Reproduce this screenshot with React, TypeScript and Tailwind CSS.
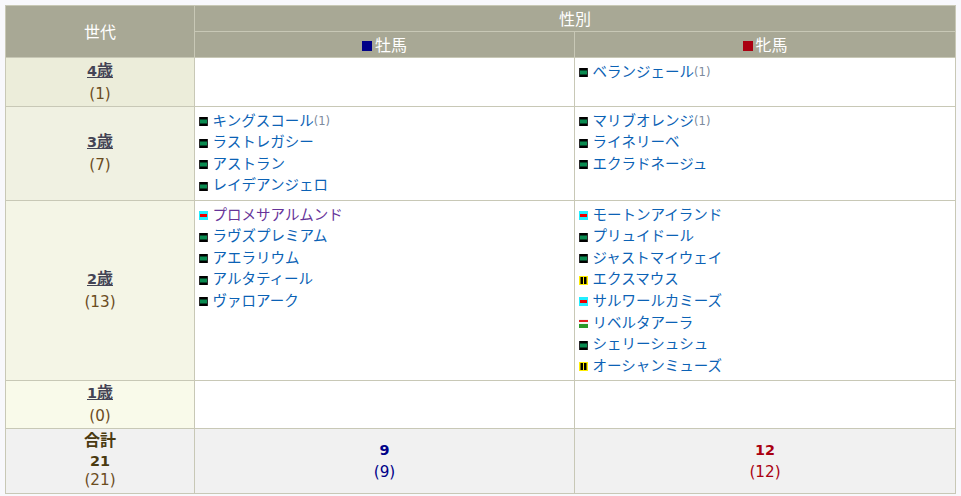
type Silk = "green" | "cyan" | "yellow" | "white";

type Horse = { name: string; silk: Silk; count?: number; visited?: boolean };

function SilkIcon({ silk }: { silk: Silk }) {
    return (
        <svg width="9" height="9" viewBox="0 0 9 9" className="mr-[4.6px] inline-block shrink-0">
            {silk === "green" && (
                <>
                    <rect width="9" height="9" fill="#2a2a2a" />
                    <rect x="1" width="7" height="9" fill="#000" />
                    <rect x="1" y="2.5" width="7" height="4" fill="#0a8a50" />
                </>
            )}
            {silk === "cyan" && (
                <>
                    <rect width="9" height="9" fill="#22eeff" />
                    <rect x="1" y="3" width="7" height="3" fill="#f00000" />
                </>
            )}
            {silk === "yellow" && (
                <>
                    <rect width="9" height="9" fill="#ffee00" />
                    <rect x="1.5" y="1" width="2.5" height="7" fill="#000" />
                    <rect x="5" y="1" width="2.5" height="7" fill="#000" />
                </>
            )}
            {silk === "white" && (
                <>
                    <rect width="9" height="9" fill="#f4f4f4" />
                    <rect y="1" width="9" height="2" fill="#e02020" />
                    <rect y="5" width="9" height="4" fill="#2a9a2a" />
                </>
            )}
        </svg>
    );
}

function HorseList({ horses }: { horses: Horse[] }) {
    return (
        <ul className="flex flex-col">
            {horses.map((h) => (
                <li key={h.name} className="flex h-[21.6px] items-center whitespace-nowrap">
                    <SilkIcon silk={h.silk} />
                    <a href="#" className={h.visited ? "text-[#663399]" : "text-[#0b62b5]"}>
                        {h.name}
                    </a>
                    {h.count !== undefined && (
                        <span className="text-[11.5px] text-[#7d8a9c]">({h.count})</span>
                    )}
                </li>
            ))}
        </ul>
    );
}

function AgeCell({ age, count, bg }: { age: string; count: number; bg: string }) {
    return (
        <td className={`border border-[#c8c8b6] text-center align-middle ${bg}`}>
            <a href="#" className="block h-[21px] font-bold leading-[21px] text-[#444455] underline">
                <span className="text-[14.4px]">{age.slice(0, 1)}</span>
                <span className="text-[16px]">{age.slice(1)}</span>
            </a>
            <div className="mt-[2px] h-[22px] text-[15.2px] leading-[22px] text-[#6b4c1e]">({count})</div>
        </td>
    );
}

const rows: { age: string; count: number; bg: string; h: string; male: Horse[]; female: Horse[] }[] = [
    {
        age: "4歳",
        count: 1,
        bg: "bg-[#ecedda]",
        h: "h-[49px]",
        male: [],
        female: [{ name: "ベランジェール", silk: "green", count: 1 }],
    },
    {
        age: "3歳",
        count: 7,
        bg: "bg-[#f0f1e2]",
        h: "h-[94px]",
        male: [
            { name: "キングスコール", silk: "green", count: 1 },
            { name: "ラストレガシー", silk: "green" },
            { name: "アストラン", silk: "green" },
            { name: "レイデアンジェロ", silk: "green" },
        ],
        female: [
            { name: "マリブオレンジ", silk: "green", count: 1 },
            { name: "ライネリーベ", silk: "green" },
            { name: "エクラドネージュ", silk: "green" },
        ],
    },
    {
        age: "2歳",
        count: 13,
        bg: "bg-[#f4f5e6]",
        h: "h-[180px]",
        male: [
            { name: "プロメサアルムンド", silk: "cyan", visited: true },
            { name: "ラヴズプレミアム", silk: "green" },
            { name: "アエラリウム", silk: "green" },
            { name: "アルタティール", silk: "green" },
            { name: "ヴァロアーク", silk: "green" },
        ],
        female: [
            { name: "モートンアイランド", silk: "cyan" },
            { name: "プリュイドール", silk: "green" },
            { name: "ジャストマイウェイ", silk: "green" },
            { name: "エクスマウス", silk: "yellow" },
            { name: "サルワールカミーズ", silk: "cyan" },
            { name: "リベルタアーラ", silk: "white" },
            { name: "シェリーシュシュ", silk: "green" },
            { name: "オーシャンミューズ", silk: "yellow" },
        ],
    },
    { age: "1歳", count: 0, bg: "bg-[#f9faea]", h: "h-[48px]", male: [], female: [] },
];

export default function App() {
    return (
        <div className="min-h-screen bg-[#f8f8fc] px-[5px] pt-[5px] font-['DejaVu_Sans','Noto_Sans_CJK_JP',sans-serif] text-[14.5px]">
            <table className="w-[950px] table-fixed border-collapse bg-white">
                <colgroup>
                    <col className="w-[189px]" />
                    <col className="w-[380px]" />
                    <col className="w-[381px]" />
                </colgroup>
                <thead className="bg-[#a8a895] text-[16px] leading-[20px] text-white">
                    <tr className="h-[26px]">
                        <th rowSpan={2} className="border border-[#c8c8b6] pt-[2px] font-normal">
                            世代
                        </th>
                        <th colSpan={2} className="border border-[#c8c8b6] pt-[2px] font-normal">
                            性別
                        </th>
                    </tr>
                    <tr className="h-[26px]">
                        <th className="border border-[#c8c8b6] pt-[2px] font-normal">
                            <span className="mr-[3px] inline-block h-[10px] w-[10px] bg-[#000088]" />
                            牡馬
                        </th>
                        <th className="border border-[#c8c8b6] pt-[2px] font-normal">
                            <span className="mr-[3px] inline-block h-[10px] w-[10px] bg-[#aa0011]" />
                            牝馬
                        </th>
                    </tr>
                </thead>
                <tbody>
                    {rows.map((r) => (
                        <tr key={r.age} className={r.h}>
                            <AgeCell age={r.age} count={r.count} bg={r.bg} />
                            <td className="border border-[#c8c8b6] px-1 pt-[3.7px] align-top">
                                <HorseList horses={r.male} />
                            </td>
                            <td className="border border-[#c8c8b6] px-1 pt-[3.7px] align-top">
                                <HorseList horses={r.female} />
                            </td>
                        </tr>
                    ))}
                    <tr className="h-[65px] bg-[#f1f1f1] text-center">
                        <td className="border border-[#c8c8b6] pb-[2px] text-[#4a3a10]">
                            <div className="h-[20px] text-[16px] font-bold leading-[20px]">合計</div>
                            <div className="h-[20px] text-[14.4px] font-bold leading-[20px]">21</div>
                            <div className="h-[19px] text-[15.2px] leading-[19px] text-[#6b4c1e]">(21)</div>
                        </td>
                        <td className="border border-[#c8c8b6] text-[#000088]">
                            <div className="text-[14.4px] font-bold leading-[22px]">9</div>
                            <div className="text-[15.2px] leading-[22px]">(9)</div>
                        </td>
                        <td className="border border-[#c8c8b6] text-[#aa0011]">
                            <div className="text-[14.4px] font-bold leading-[22px]">12</div>
                            <div className="text-[15.2px] leading-[22px]">(12)</div>
                        </td>
                    </tr>
                </tbody>
            </table>
        </div>
    );
}
